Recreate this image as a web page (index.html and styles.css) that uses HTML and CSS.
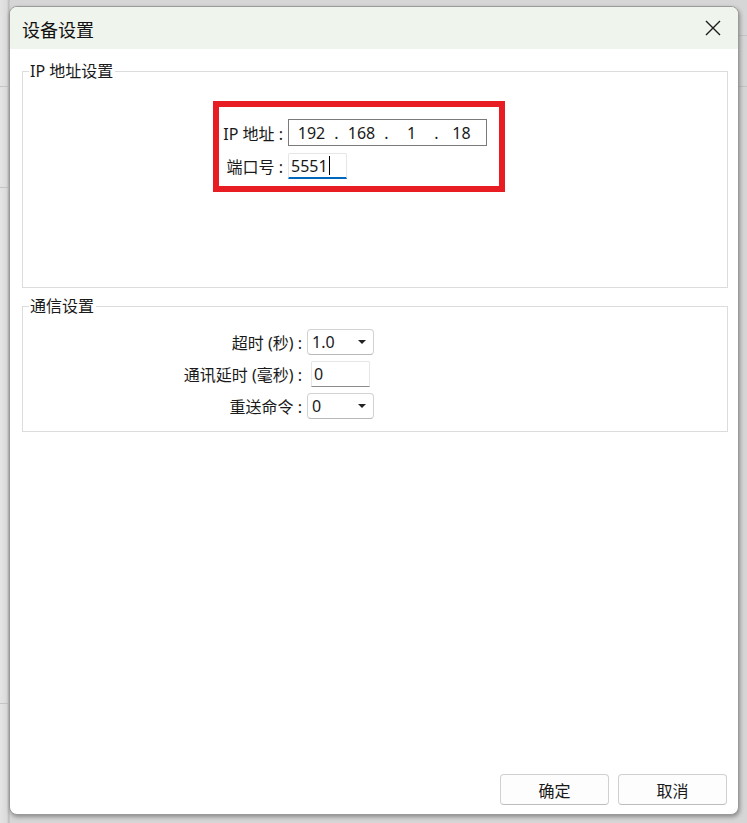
FILE: index.html
```html
<!DOCTYPE html>
<html lang="zh-CN">
<head>
<meta charset="utf-8">
<title>设备设置</title>
<link rel="stylesheet" href="styles.css">
</head>
<body>
<div class="desktop">
  <div class="dialog">
    <div class="titlebar">
      <span class="title">设备设置</span>
      <svg class="close" width="16" height="16" viewBox="0 0 16 16" aria-hidden="true">
        <path d="M1 1 L15 15 M15 1 L1 15" stroke="#1b1b1b" stroke-width="1.4" fill="none"/>
      </svg>
    </div>
    <div class="content">
      <fieldset class="group group-ip">
        <legend>IP 地址设置</legend>
        <div class="highlight">
          <div class="form-grid">
            <span class="lbl">IP 地址 :</span>
            <div class="ipbox">
              <span class="oct">192</span><span class="dot">.</span>
              <span class="oct">168</span><span class="dot">.</span>
              <span class="oct">1</span><span class="dot">.</span>
              <span class="oct">18</span>
            </div>
            <span class="lbl">端口号 :</span>
            <div class="portbox">5551<span class="caret"></span></div>
          </div>
        </div>
      </fieldset>
      <fieldset class="group group-comm">
        <legend>通信设置</legend>
        <div class="comm-grid">
          <span class="lbl">超时 (秒) :</span>
          <div class="combo"><span>1.0</span><span class="arrow"></span></div>
          <span class="lbl">通讯延时 (毫秒) :</span>
          <div class="edit">0</div>
          <span class="lbl">重送命令 :</span>
          <div class="combo"><span>0</span><span class="arrow"></span></div>
        </div>
      </fieldset>
      <div class="spacer"></div>
      <div class="buttons">
        <button class="btn">确定</button>
        <button class="btn">取消</button>
      </div>
    </div>
  </div>
</div>
</body>
</html>
```

FILE: styles.css
```css
html, body {
  margin: 0;
  padding: 0;
}

body {
  font-family: "Noto Sans", "Noto Sans CJK SC", sans-serif;
  color: #1a1a1a;
}

.desktop {
  width: 747px;
  height: 823px;
  box-sizing: border-box;
  padding: 6px 8px 8px 9px;
  background-color: #d6d6d6;
  background-image:
    linear-gradient(#c4c4c4, #c4c4c4),
    linear-gradient(#c4c4c4, #c4c4c4),
    linear-gradient(#c4c4c4, #c4c4c4),
    linear-gradient(#c4c4c4, #c4c4c4),
    linear-gradient(#c4c4c4, #c4c4c4),
    linear-gradient(to right, #e4e4e4 0, #dadada 7px, #b8b8b8 9px, #d6d6d6 10px);
  background-size:
    9px 1px,
    9px 1px,
    9px 1px,
    8px 1px,
    8px 1px,
    100% 100%;
  background-position:
    0 86px,
    0 187px,
    0 703px,
    739px 35px,
    739px 86px,
    0 0;
  background-repeat: no-repeat;
}

.dialog {
  width: 730px;
  height: 809px;
  box-sizing: border-box;
  border: 1px solid #9a9a9a;
  border-radius: 8px;
  background: #ffffff;
  overflow: hidden;
  display: flex;
  flex-direction: column;
  box-shadow: 1px 2px 4px rgba(0, 0, 0, 0.35);
}

.titlebar {
  height: 42px;
  flex: none;
  background: #eff4ec;
  display: flex;
  align-items: center;
  justify-content: space-between;
  padding: 0 17px 0 12px;
}

.title {
  font-size: 18px;
  font-family: "Noto Sans CJK SC", sans-serif;
  color: #111;
  padding-top: 2px;
}

.close {
  display: block;
}

.content {
  flex: 1;
  display: flex;
  flex-direction: column;
  padding: 13px 10px 9px 12px;
}

.group {
  margin: 0;
  padding: 0;
  border: 1px solid #dcdcdc;
  box-sizing: border-box;
  min-width: 0;
}

.group legend {
  margin-left: 6px;
  padding: 0 2px 0 1px;
  font-size: 16px;
  line-height: 18px;
  font-family: "Noto Sans", "Noto Sans CJK SC", sans-serif;
  color: #1a1a1a;
}

.group-ip {
  height: 226px;
}

.group-comm {
  height: 135px;
  margin-top: 9px;
}

.lbl {
  font-size: 16px;
  font-family: "Noto Sans", "Noto Sans CJK SC", sans-serif;
  text-align: right;
  white-space: nowrap;
  color: #1a1a1a;
}

.highlight {
  margin: 21px 0 0 190px;
  width: 292px;
  height: 91px;
  box-sizing: border-box;
  border: 6px solid #e81c23;
  padding: 12px 0 0 2px;
}

.form-grid {
  display: grid;
  grid-template-columns: 62px auto;
  column-gap: 5px;
  row-gap: 7px;
  align-items: center;
  justify-items: start;
}

.form-grid .lbl {
  justify-self: end;
}

.ipbox {
  width: 199px;
  height: 27px;
  box-sizing: border-box;
  border: 1px solid #7a7a7a;
  display: flex;
  align-items: center;
  padding-left: 4px;
  font-size: 16px;
  color: #1a1a1a;
}

.oct {
  width: 37px;
  text-align: center;
}

.dot {
  width: 13px;
  text-align: center;
}

.portbox {
  width: 59px;
  height: 26px;
  box-sizing: border-box;
  border: 1px solid #e6e6e6;
  border-bottom: 2px solid #0067c0;
  border-radius: 2px 2px 0 0;
  display: flex;
  align-items: center;
  padding-left: 2px;
  font-size: 16px;
  color: #1a1a1a;
}

.caret {
  display: inline-block;
  width: 1px;
  height: 19px;
  background: #000;
  margin-left: 1px;
}

.comm-grid {
  margin-top: 14px;
  padding-left: 4px;
  display: grid;
  grid-template-columns: 275px 67px;
  column-gap: 5px;
  row-gap: 6px;
  align-items: center;
}

.comm-grid .lbl {
  justify-self: end;
}

.combo {
  width: 67px;
  height: 26px;
  box-sizing: border-box;
  border: 1px solid #d2d2d2;
  border-bottom-color: #b8b8b8;
  border-radius: 4px;
  display: flex;
  align-items: center;
  justify-content: space-between;
  padding: 0 7px 0 4px;
  font-size: 16px;
  color: #1a1a1a;
}

.arrow {
  width: 0;
  height: 0;
  border-left: 4px solid transparent;
  border-right: 4px solid transparent;
  border-top: 4px solid #222;
}

.edit {
  justify-self: center;
  width: 59px;
  height: 26px;
  box-sizing: border-box;
  border: 1px solid #e6e6e6;
  border-bottom: 1px solid #8a8a8a;
  border-radius: 2px 2px 0 0;
  display: flex;
  align-items: center;
  padding-left: 2px;
  font-size: 16px;
  color: #1a1a1a;
}

.spacer {
  flex: 1;
}

.buttons {
  display: flex;
  justify-content: flex-end;
  gap: 9px;
  padding-right: 1px;
}

.btn {
  width: 109px;
  height: 31px;
  box-sizing: border-box;
  border: 1px solid #d0d0d0;
  border-bottom-color: #bdbdbd;
  border-radius: 4px;
  background: #fdfdfd;
  font-family: "Noto Sans CJK SC", sans-serif;
  font-size: 16px;
  color: #1a1a1a;
  padding: 0;
}
```
